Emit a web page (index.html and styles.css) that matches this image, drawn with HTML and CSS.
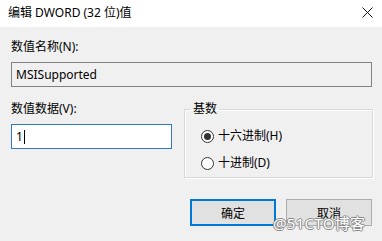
FILE: index.html
```html
<!DOCTYPE html>
<html>
	<head>
		<meta charset="utf-8">
		<title>编辑 DWORD (32 位)值</title>
		<link rel="stylesheet" href="styles.css">
	</head>
	<body>
		<div id="dialog">
			<div id="titlebar">
				<span id="title">编辑 DWORD (32 位)值</span>
				<svg id="close" width="11" height="11" viewBox="0 0 11 11">
					<path d="M0.5 0.5 L10.5 10.5 M10.5 0.5 L0.5 10.5" stroke="#111" stroke-width="1" fill="none" />
				</svg>
			</div>

			<div id="content">
				<p class="label">数值名称(N):</p>
				<div class="field readonly">MSISupported</div>

				<div id="row">
					<div id="data">
						<p class="label">数值数据(V):</p>
						<div class="field active">1<span class="caret"></span></div>
					</div>

					<fieldset id="base">
						<legend>基数</legend>
						<div class="radio"><span class="dot checked"></span>十六进制(H)</div>
						<div class="radio"><span class="dot"></span>十进制(D)</div>
					</fieldset>
				</div>

				<div id="buttons">
					<button class="btn default">确定</button>
					<button class="btn">取消</button>
				</div>
			</div>

			<!-- watermark over the buttons -->
			<span id="watermark">@51CTO博客</span>
		</div>
	</body>
</html>
```

FILE: styles.css
```css
* {
	padding:0px;
	margin:0px;
	box-sizing:border-box;

	font-family:"Noto Sans", "Noto Sans CJK SC", sans-serif;
	font-size:12px;
}

body {
	background-color:#f0f0f0;
	color:#000;
}

#dialog {
	position:relative;
	width:382px;
	height:241px;
	overflow:hidden;
}

#titlebar {
	height:27px;
	padding:0px 8px 0px 8px;

	background:#fff;

	display:flex;
	align-items:center;
	justify-content:space-between;
}
	#title {
		line-height:16px;
		margin-top:-2px;
	}
	#close {
		margin-top:-3px;
		margin-right:1px;
	}

#content {
	padding:12px 9px 0px 11px;
}

.label {
	line-height:16px;
	margin-bottom:7px;
}

.field {
	height:25px;
	padding-left:4px;

	border:1px solid #828282;
	line-height:23px;

	display:flex;
	align-items:center;
}
	.readonly {
		background:#f0f0f0;
		margin-right:1px;
	}
	.active {
		background:#fff;
		border-color:#2f7cc4;
	}
	.caret {
		width:1px;
		height:14px;
		margin-left:1px;
		background:#000;
	}

#row {
	margin-top:14px;

	display:flex;
	align-items:flex-start;
	gap:12px;
}
	#data {
		width:161px;
	}

#base {
	flex:1;
	padding:0px 0px 6px 6px;

	border:1px solid #d9d9d9;
	box-shadow:inset 1px 1px 0px #fff, 1px 1px 0px #fff;
}
	#base legend {
		padding:0px 2px;
		line-height:16px;
	}

.radio {
	margin:11px 0px 0px 10px;
	line-height:16px;

	display:flex;
	align-items:center;
}
	.dot {
		width:13px;
		height:13px;
		margin-right:4px;

		border:1px solid #333;
		border-radius:50%;
		background:#fff;

		display:flex;
		align-items:center;
		justify-content:center;
	}
	.dot.checked::after {
		content:"";
		width:7px;
		height:7px;
		border-radius:50%;
		background:#333;
	}

#buttons {
	margin-top:21px;
	padding-right:1px;

	display:flex;
	justify-content:flex-end;
	gap:10px;
}

.btn {
	width:86px;
	height:27px;

	background:#e1e1e1;
	border:1px solid #adadad;

	font-size:12px;
	color:#000;
}
	.btn.default {
		border:2px solid #0078d7;
	}

#watermark {
	position:absolute;
	left:273px;
	top:212px;

	font-size:15px;
	letter-spacing:0.3px;
	color:#fff;
	text-shadow:1px 0px 0px #888, -1px 0px 0px #888, 0px 1px 0px #888, 0px -1px 0px #888;
}
```
